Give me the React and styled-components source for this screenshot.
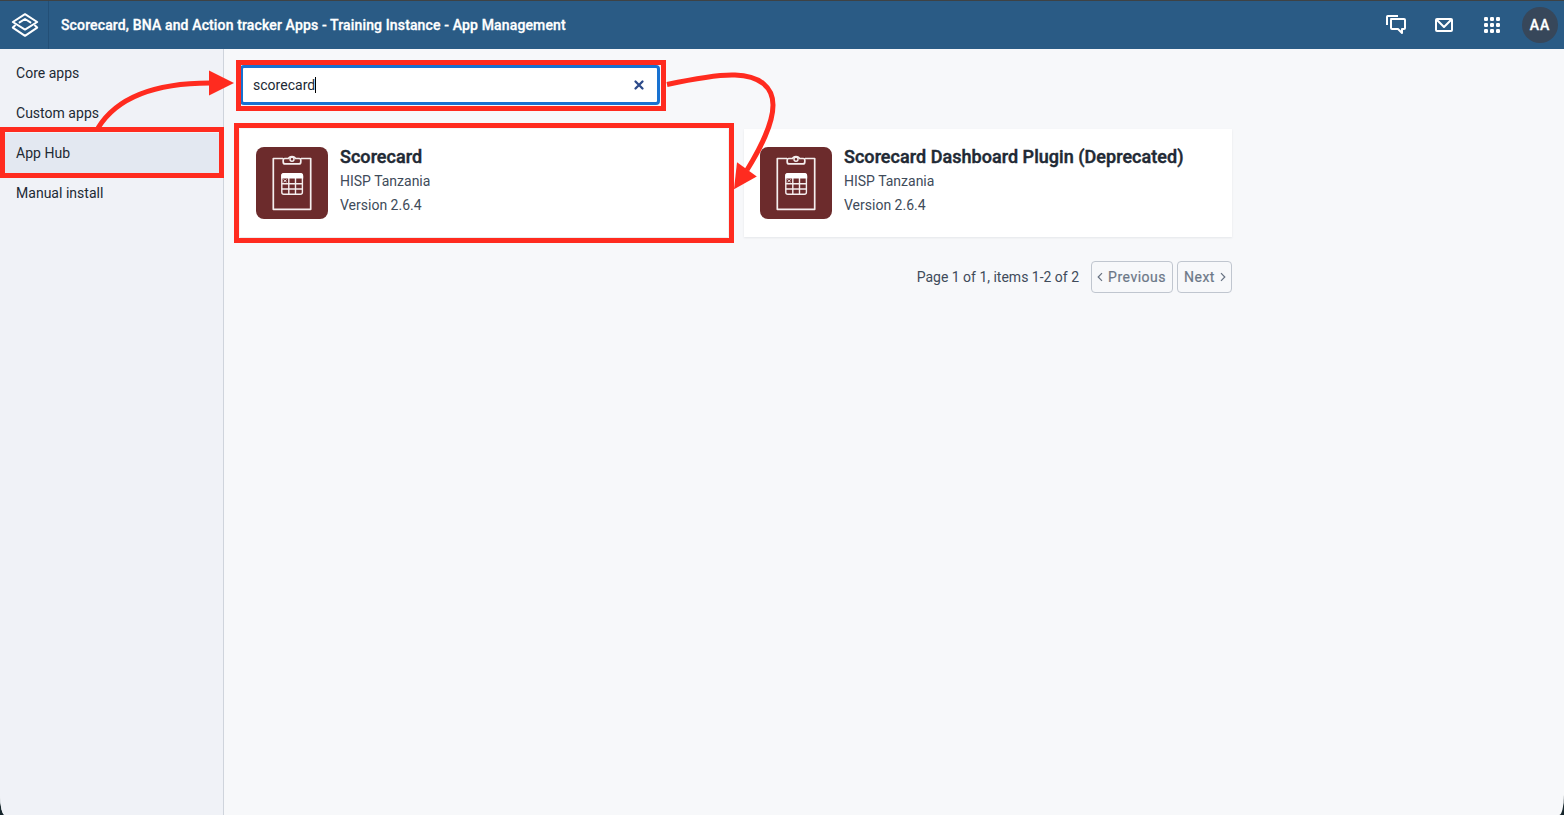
import React from "react";
import styled, { createGlobalStyle } from "styled-components";

const Global = createGlobalStyle`
  * { box-sizing: border-box; }
  body { margin: 0; background: #16252b; font-family: Roboto, "Liberation Sans", sans-serif; font-size: 14px; color: #212934; }
`;

const Page = styled.div`
  position: relative;
  display: flex;
  flex-direction: column;
  height: 815px;
  overflow: hidden;
  border-radius: 0 0 5px 5px / 0 0 20px 20px;
  background: #f7f8fa;
`;

const Header = styled.header`
  display: flex;
  align-items: center;
  height: 49px;
  flex: none;
  border-top: 1px solid #3e4244;
  background: #2a5b85;
  color: #fff;
  padding-right: 6px;
`;

const Logo = styled.div`
  display: flex;
  align-items: center;
  justify-content: center;
  width: 49px;
  height: 48px;
  padding-left: 1px;
  border-right: 1px solid #234f76;
`;

const Title = styled.div`
  flex: 1;
  padding-left: 12px;
  font-weight: 500;
  font-size: 14px;
  letter-spacing: 0.138px;
  white-space: nowrap;
  -webkit-text-stroke: 0.3px #fff;
`;

const HeaderButton = styled.div`
  display: flex;
  align-items: center;
  justify-content: center;
  width: 48px;
  height: 48px;
`;

const Avatar = styled.div`
  display: flex;
  align-items: center;
  justify-content: center;
  width: 36px;
  height: 36px;
  margin-left: 6px;
  border-radius: 50%;
  background: #37475a;
  font-weight: 500;
  font-size: 14px;
  letter-spacing: 0.9px;
  -webkit-text-stroke: 0.3px #fff;
`;

const Body = styled.div`
  display: flex;
  flex: 1;
`;

const Sidebar = styled.nav`
  display: flex;
  flex-direction: column;
  width: 224px;
  padding-top: 4px;
  background: #f0f2f7;
  border-right: 1px solid #cfd4dc;
`;

const NavItem = styled.div`
  display: flex;
  align-items: center;
  height: 40px;
  padding-left: 16px;
  color: #212934;
  letter-spacing: 0.02px;
  background: ${(p) => (p.$active ? "#e3e8f1" : "transparent")};
`;

const Main = styled.main`
  display: flex;
  flex-direction: column;
  width: 1008px;
  padding: 16px 0 0 16px;
`;

const SearchBox = styled.div`
  display: flex;
  align-items: center;
  justify-content: space-between;
  width: 420px;
  height: 40px;
  padding: 0 12px 0 10px;
  border: 3px solid #1872d1;
  border-radius: 4px;
  background: #fff;
`;

const Query = styled.span`
  display: flex;
  align-items: center;
  letter-spacing: 0.02px;
  &::after { content: ""; width: 1px; height: 16px; background: #000; }
`;

const Cards = styled.div`
  display: grid;
  grid-template-columns: 1fr 1fr;
  gap: 16px;
  margin-top: 24px;
`;

const Card = styled.article`
  display: flex;
  gap: 12px;
  height: 108px;
  padding: 18px 16px;
  background: #fff;
  box-shadow: 0 1px 2px rgba(64, 75, 90, 0.1);
`;

const CardText = styled.div`
  display: flex;
  flex-direction: column;
  color: #404b5a;
  line-height: 24px;
  letter-spacing: 0;
  margin-top: -2px;
`;

const CardTitle = styled.h2`
  margin: 0;
  font-size: 18px;
  font-weight: 500;
  line-height: 24px;
  letter-spacing: 0.04px;
  color: #212934;
  -webkit-text-stroke: 0.45px #212934;
`;

const Pager = styled.div`
  display: flex;
  align-items: center;
  justify-content: flex-end;
  margin-top: 24px;
  color: #404b5a;
  white-space: nowrap;
`;

const PageStatus = styled.span`
  margin-right: 12px;
  letter-spacing: -0.01px;
`;

const PageButton = styled.div`
  display: flex;
  align-items: center;
  justify-content: space-between;
  width: ${(p) => p.$width};
  height: 32px;
  padding: ${(p) => p.$padding};
  margin-left: ${(p) => p.$gap || "0"};
  border: 1px solid #c0c6cf;
  border-radius: 4px;
  color: #6c7787;
  letter-spacing: 0.5px;
  -webkit-text-stroke: 0.2px #6c7787;
`;

const Highlight = styled.div`
  position: absolute;
  left: ${(p) => p.$x}px;
  top: ${(p) => p.$y}px;
  width: ${(p) => p.$w}px;
  height: ${(p) => p.$h}px;
  border: 5px solid #ff2b1f;
`;

const Arrows = styled.svg`
  position: absolute;
  left: 0;
  top: 0;
  pointer-events: none;
`;

function LayersIcon() {
  return (
    <svg width="28" height="26" viewBox="0 0 28 26" fill="none" stroke="#fff" strokeWidth="2" strokeLinejoin="round" strokeLinecap="round">
      <path d="M14 2.2 26.2 10 14 17.6 1.8 10Z" />
      <path d="M8.6 10.4 14 7l5.4 3.4" />
      <path d="M4 13.6 1.8 15.6 14 23.8l12.2-8.2-2.2-2" />
    </svg>
  );
}

function MessagesIcon() {
  return (
    <svg width="24" height="24" viewBox="0 0 24 24" fill="none" stroke="#fff" strokeWidth="2" strokeLinejoin="round">
      <path d="M3 12V3.7Q3 3 3.7 3H14" />
      <path d="M7 6h13q1 0 1 1v8q0 1-1 1h-2v4l-4-4H8q-1 0-1-1V7q0-1 1-1Z" />
    </svg>
  );
}

function MailIcon() {
  return (
    <svg width="24" height="24" viewBox="0 0 24 24" fill="none" stroke="#fff" strokeWidth="2" strokeLinejoin="round">
      <rect x="4" y="6" width="16" height="12" rx="1" />
      <path d="m5 7 7 7 7-7" />
    </svg>
  );
}

function AppsIcon() {
  return (
    <svg width="24" height="24" viewBox="0 0 24 24" fill="#fff">
      {[4, 10, 16].map((y) => [4, 10, 16].map((x) => <rect key={x + "-" + y} x={x} y={y} width="4" height="4" rx="1.3" />))}
    </svg>
  );
}

function ClearIcon() {
  return (
    <svg width="12" height="12" viewBox="0 0 12 12" stroke="#2c4a8a" strokeWidth="2.3" strokeLinecap="round">
      <path d="m2.5 2.5 7 7m0-7-7 7" />
    </svg>
  );
}

function ScorecardIcon() {
  return (
    <svg width="72" height="72" viewBox="0 0 72 72" fill="none">
      <rect width="72" height="72" rx="8" fill="#6c2b2c" />
      <g stroke="#f5eeee" strokeLinejoin="round">
        <path strokeWidth="1.7" d="M27 11.5h-9.7V62.3h37.4V11.5H45" />
        <path strokeWidth="1.7" d="M28.8 11.5h3.8q.6-2 3.4-2t3.4 2h3.8q1.6 0 1.6 1.6v1.8q0 2-2 2H29.2q-2 0-2-2v-1.8q0-1.6 1.6-1.6Z" />
        <circle cx="36" cy="12.3" r="2" strokeWidth="1.4" />
        <rect x="25.8" y="26.8" width="20.6" height="20.4" rx="2" strokeWidth="1.4" />
        <path strokeWidth="1.4" d="M25.8 36.8h20.6M25.8 42h20.6M32.8 31v16.2M39.5 31v16.2" />
        <path strokeWidth=".9" d="m27.5 32.5 3.2 2.6m0-2.6-3.2 2.6" />
      </g>
      <path d="M25.2 31.5V29q0-3 3-3h16q3 0 3 3v2.5Z" fill="#fff" />
    </svg>
  );
}

function Chevron({ right }) {
  return (
    <svg width="6" height="10" viewBox="0 0 6 10" fill="none" stroke="#667181" strokeWidth="1.2">
      <path d={right ? "m1 1.2 3.8 3.8L1 8.8" : "M5 1.2 1.2 5 5 8.8"} />
    </svg>
  );
}

function AppCard({ name }) {
  return (
    <Card>
      <ScorecardIcon />
      <CardText>
        <CardTitle>{name}</CardTitle>
        <span>HISP Tanzania</span>
        <span>Version 2.6.4</span>
      </CardText>
    </Card>
  );
}

export default function App() {
  return (
    <>
      <Global />
      <Page>
        <Header>
          <Logo><LayersIcon /></Logo>
          <Title>Scorecard, BNA and Action tracker Apps - Training Instance - App Management</Title>
          <HeaderButton><MessagesIcon /></HeaderButton>
          <HeaderButton><MailIcon /></HeaderButton>
          <HeaderButton><AppsIcon /></HeaderButton>
          <Avatar>AA</Avatar>
        </Header>
        <Body>
          <Sidebar>
            <NavItem>Core apps</NavItem>
            <NavItem>Custom apps</NavItem>
            <NavItem $active>App Hub</NavItem>
            <NavItem>Manual install</NavItem>
          </Sidebar>
          <Main>
            <SearchBox>
              <Query>scorecard</Query>
              <ClearIcon />
            </SearchBox>
            <Cards>
              <AppCard name="Scorecard" />
              <AppCard name="Scorecard Dashboard Plugin (Deprecated)" />
            </Cards>
            <Pager>
              <PageStatus>Page 1 of 1, items 1-2 of 2</PageStatus>
              <PageButton $width="82px" $padding="0 6px 0 5px"><Chevron />Previous</PageButton>
              <PageButton $width="55px" $padding="0 5px 0 6px" $gap="4px">Next<Chevron right /></PageButton>
            </Pager>
          </Main>
        </Body>
        <Highlight $x={0} $y={127} $w={224} $h={51} />
        <Highlight $x={236} $y={60} $w={430} $h={51} />
        <Highlight $x={234} $y={123} $w={500} $h={120} />
        <Arrows width="800" height="260" fill="none" stroke="#ff2b1f" strokeWidth="5">
          <path d="M98 128C117 97 155 83 210 83" />
          <path d="M209 70.5v25L234 83Z" fill="#ff2b1f" stroke="none" />
          <path d="M667 84.5C702 77 723 74.5 735 75C760 76 773 87 773 105C773 124 761 147 747 170" />
          <path d="M737 162.3 756.8 176.4 734 189.3Z" fill="#ff2b1f" stroke="none" />
        </Arrows>
      </Page>
    </>
  );
}
